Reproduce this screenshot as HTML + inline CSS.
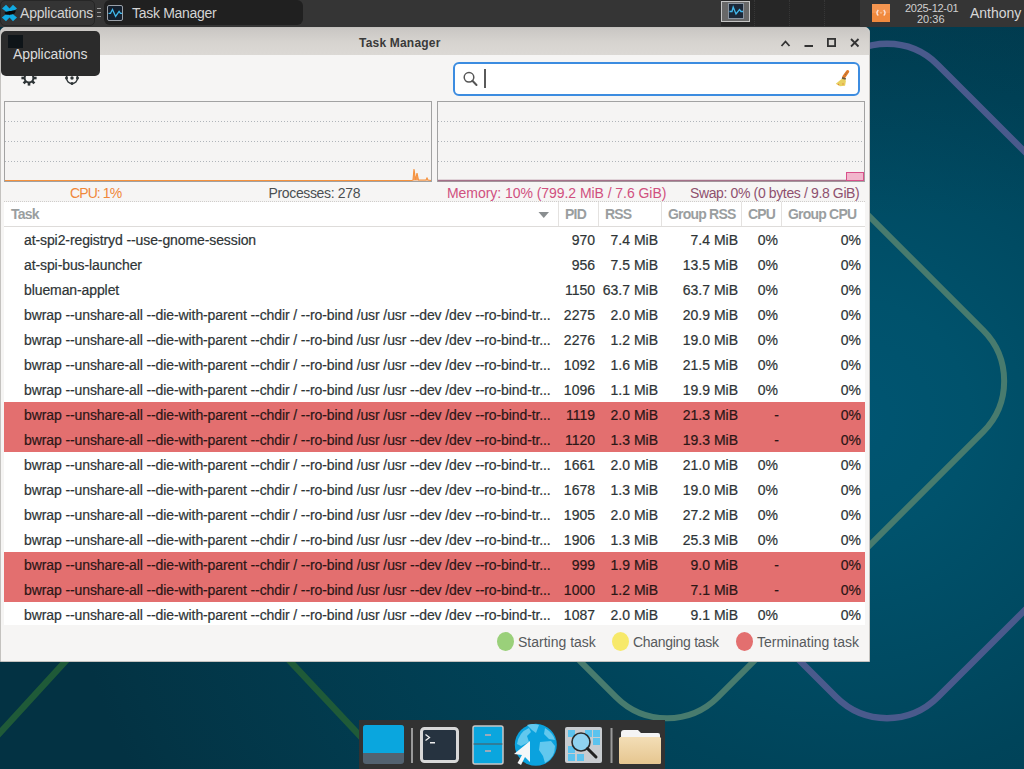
<!DOCTYPE html>
<html><head><meta charset="utf-8">
<style>
*{box-sizing:border-box;margin:0;padding:0}
html,body{width:1024px;height:769px;overflow:hidden;font-family:"Liberation Sans",sans-serif;}
body{position:relative;background:#0a4a60;}
.a{position:absolute}
.t{position:absolute;white-space:pre;font-size:14px;line-height:17px}
.row{position:absolute;left:4px;width:861px;background:#fff;color:#2e3436;-webkit-text-stroke:0.2px #2e3436;font-size:14px;line-height:17px;white-space:pre;overflow:hidden}
.row.red{background:#e36f6f;color:#2b1616;-webkit-text-stroke:0.2px #2b1616}
.tname{position:absolute;left:20px;letter-spacing:-0.1px}
.val{position:absolute;text-align:right}
.hd{position:absolute;top:206px;color:#9a9e9f;font-size:14px;line-height:17px;white-space:pre;font-weight:bold;letter-spacing:-0.8px}
.sep{position:absolute;top:202px;width:1px;height:24px;background:#e4e2e0}
</style></head><body>
<!-- wallpaper -->
<svg class="a" style="left:0;top:0" width="1024" height="769" viewBox="0 0 1024 769">
 <defs>
  <radialGradient id="g1" gradientUnits="userSpaceOnUse" cx="850" cy="420" r="800" fx="850" fy="420">
   <stop offset="0" stop-color="#005572"/>
   <stop offset="0.15" stop-color="#00526c"/>
   <stop offset="0.3" stop-color="#004b63"/>
   <stop offset="0.45" stop-color="#00445a"/>
   <stop offset="0.95" stop-color="#033445"/>
   <stop offset="1" stop-color="#033243"/>
  </radialGradient>
  <linearGradient id="g2" x1="0" y1="0" x2="0" y2="1">
   <stop offset="0" stop-color="#00141e" stop-opacity="0.15"/>
   <stop offset="1" stop-color="#00141e" stop-opacity="0"/>
  </linearGradient>
 </defs>
 <rect width="1024" height="769" fill="url(#g1)"/>
 <rect width="1024" height="220" fill="url(#g2)"/>
 <rect x="407.5" y="121.5" width="519" height="519" rx="72" transform="rotate(45 667 381)" fill="none" stroke="#487b6e" stroke-width="6"/>
 <rect x="627.5" y="121.5" width="519" height="519" rx="72" transform="rotate(45 887 381)" fill="none" stroke="#4a5a8c" stroke-width="6.5"/>
 <path d="M-180.5 930 L176.4 540 L541.8 930" fill="none" stroke="#1f5a38" stroke-width="6.5"/>
</svg>

<!-- top panel -->
<div class="a" style="left:0;top:0;width:1024px;height:27px;background:#353535"></div>
<div class="a" style="left:0;top:0;width:95px;height:26px;background:#343434;border:1px solid #262626;border-radius:5px"></div>
<svg class="a" style="left:0;top:0" width="20" height="26" viewBox="0 0 20 26">
 <g fill="#12aae2">
  <path d="M2 8.5 L6 4.8 L10.5 9.5 L8 13 Z"/>
  <path d="M17 8.5 L13 4.8 L8.5 9.5 L11 13 Z"/>
  <path d="M1.8 17.5 L6 21.3 L10.5 16.5 L7.5 13 Z"/>
  <path d="M17 17.5 L13 21.3 L8.5 16.5 L11.5 13 Z"/>
 </g>
 <path d="M4.5 12.5 Q8 10.5 11 11 Q13.5 10 16 10.5 L14.5 13.5 Q10.5 15.5 5.5 14.5 Z" fill="#080808"/>
</svg>
<div class="t" style="left:20px;top:5px;color:#d4d4d4;letter-spacing:-0.2px">Applications</div>
<div class="a" style="left:97px;top:8px;width:4px;height:1px;background:#9a9a9a"></div>
<div class="a" style="left:97px;top:12px;width:4px;height:1px;background:#9a9a9a"></div>
<div class="a" style="left:97px;top:16px;width:4px;height:1px;background:#9a9a9a"></div>
<div class="a" style="left:104px;top:0;width:199px;height:25px;background:#202020;border-radius:6px"></div>
<div class="a" style="left:107px;top:5px;width:16px;height:16px;border:1px solid #9aa0a8;border-radius:2px;background:#14202e"></div>
<svg class="a" style="left:107px;top:5px" width="16" height="16"><polyline points="1.5,8.3 3.5,8.3 5.5,4.4 8.6,11.4 12.1,6.3 13.5,8.3 15,8.3" fill="none" stroke="#40b8ec" stroke-width="1.3"/></svg>
<div class="t" style="left:132px;top:5px;color:#d4d4d4;letter-spacing:-0.3px">Task Manager</div>
<div class="a" style="left:721px;top:0;width:139px;height:26px;background:#262626"></div>
<div class="a" style="left:754px;top:0;width:0;height:26px;border-left:1px dotted #363636"></div>
<div class="a" style="left:789px;top:0;width:0;height:26px;border-left:1px dotted #363636"></div>
<div class="a" style="left:824px;top:0;width:0;height:26px;border-left:1px dotted #363636"></div>
<div class="a" style="left:721px;top:1px;width:29px;height:21px;background:#686868;border:1px solid #c4c4c4"></div>
<div class="a" style="left:728px;top:3px;width:16px;height:16px;background:#1b2838;border:1px solid #8a94a0"></div>
<svg class="a" style="left:729px;top:4px" width="14" height="14"><polyline points="0.5,7.5 3,7.5 4.2,3 7,10 10.5,5.5 12,7.5 14,7.5" fill="none" stroke="#40b8ec" stroke-width="1.3"/></svg>
<svg class="a" style="left:872px;top:4px" width="18" height="18">
 <rect width="18" height="18" fill="#f18a3e"/>
 <rect width="18" height="9" fill="#f49550"/>
 <path d="M6.3 6 Q3.6 8.8 6.3 11.6 M11.7 6 Q14.4 8.8 11.7 11.6" fill="none" stroke="#fbe2da" stroke-width="1.4"/>
 <circle cx="9" cy="8.8" r="0.9" fill="#f8c090"/>
</svg>
<div class="t" style="left:905px;top:2px;color:#d0d0d0;font-size:11px;line-height:12px;letter-spacing:-0.3px">2025-12-01</div>
<div class="t" style="left:917px;top:13px;color:#d0d0d0;font-size:11px;line-height:12px">20:36</div>
<div class="t" style="left:970px;top:5px;color:#d8d8d8">Anthony</div>

<!-- window -->
<div class="a" style="left:0;top:27px;width:870px;height:635px;background:#f6f5f4;border:1px solid #c4c2bf;border-radius:5px 5px 0 0"></div>
<div class="a" style="left:1px;top:28px;width:868px;height:27px;background:linear-gradient(#c9c6c3,#d6d3cf 50%,#dcd9d5);border-radius:4px 4px 0 0"></div>
<div class="t" style="left:359px;top:35px;font-size:12px;font-weight:bold;color:#3a3a3a;letter-spacing:0.2px">Task Manager</div>
<svg class="a" style="left:776px;top:34px" width="90" height="18">
 <polyline points="5.5,12 9.5,7.5 13.5,12" fill="none" stroke="#333" stroke-width="1.8"/>
 <rect x="28.5" y="11" width="8.5" height="2" fill="#333"/>
 <rect x="51.9" y="4.9" width="7.2" height="7.2" fill="none" stroke="#333" stroke-width="1.8"/>
 <path d="M75 5 L82.5 12.5 M82.5 5 L75 12.5" stroke="#333" stroke-width="1.8"/>
</svg>

<!-- search box -->
<div class="a" style="left:453px;top:62px;width:407px;height:34px;background:#fff;border:2px solid #3c8ce0;border-radius:6px"></div>

<!-- toolbar icons -->
<svg class="a" style="left:19px;top:68px" width="20" height="20" viewBox="-10 -10 20 20">
 <g fill="#2e3436">
  <circle r="5.4"/>
  <rect x="-1.3" y="-7.6" width="2.6" height="15.2"/>
  <rect x="-1.3" y="-7.6" width="2.6" height="15.2" transform="rotate(45)"/>
  <rect x="-1.3" y="-7.6" width="2.6" height="15.2" transform="rotate(90)"/>
  <rect x="-1.3" y="-7.6" width="2.6" height="15.2" transform="rotate(135)"/>
 </g>
 <circle r="3.4" fill="#f6f5f4"/>
</svg>
<svg class="a" style="left:62px;top:68px" width="20" height="20" viewBox="-10 -10 20 20">
 <circle r="5.5" fill="none" stroke="#2e3436" stroke-width="1.4"/>
 <g fill="#2e3436"><circle r="1.7"/><circle cx="0" cy="-5.5" r="1.5"/><circle cx="0" cy="5.5" r="1.5"/><circle cx="-5.5" cy="0" r="1.5"/><circle cx="5.5" cy="0" r="1.5"/></g>
</svg>
<svg class="a" style="left:460px;top:68px" width="20" height="20" viewBox="0 0 20 20">
 <circle cx="9" cy="9.3" r="4.8" fill="none" stroke="#555" stroke-width="1.5"/>
 <path d="M12.4 12.8 L16.5 17" stroke="#555" stroke-width="2" stroke-linecap="round"/>
</svg>
<div class="a" style="left:484px;top:69px;width:2px;height:19px;background:#5a5a5a"></div>
<svg class="a" style="left:832px;top:68px" width="20" height="22" viewBox="0 0 20 22">
 <path d="M15.6 3.6 L11.8 9" stroke="#e07a28" stroke-width="3.2" stroke-linecap="round"/>
 <path d="M14.8 4.5 L12.8 7.5" stroke="#8a6a48" stroke-width="1" stroke-dasharray="1 1"/>
 <path d="M10.2 10.6 L13.5 11.3 L13.8 13.5 L13.1 17.8 L8 18.2 L3.8 15.7 Z" fill="#e8d060"/>
 <path d="M10 9.8 L13.8 11" stroke="#6a5a40" stroke-width="1.8"/>
 <circle cx="6.5" cy="16.5" r="0.7" fill="#e08040"/><circle cx="11" cy="16" r="0.7" fill="#e08040"/>
</svg>

<!-- graphs -->
<div class="a" style="left:4px;top:101px;width:428px;height:81px;background:#f5f4f3;border:1px solid #a2a2a2"></div>
<div class="a" style="left:437px;top:101px;width:428px;height:81px;background:#f5f4f3;border:1px solid #a2a2a2"></div>
<svg class="a" style="left:0;top:100px" width="870" height="84">
 <g stroke="#b0b5ba" stroke-width="1" stroke-dasharray="1 2">
  <path d="M5 21.5 H431 M5 41.5 H431 M5 61.5 H431"/>
  <path d="M438 21.5 H864 M438 41.5 H864 M438 61.5 H864"/>
 </g>
 <path d="M5 80.5 H412 L413 80 L414 69 L415.5 80 L417 73 L418.5 80 L426 80 L427 78 L428 80 L431 80.5" fill="#f5a060" stroke="#f5923e" stroke-width="1.1"/>
 <path d="M438 80.5 H846" stroke="#a47088" stroke-width="1.5"/>
 <rect x="846.5" y="72.5" width="17" height="8" fill="#f2b6cc" stroke="#d8508a" stroke-width="1"/>
</svg>

<div class="t" style="left:70px;top:185px;color:#f0883a;letter-spacing:-0.9px">CPU: 1%</div>
<div class="t" style="left:268.5px;top:185px;color:#4a4f52;letter-spacing:-0.35px">Processes: 278</div>
<div class="t" style="left:447px;top:185px;color:#d0507f;letter-spacing:-0.05px">Memory: 10% (799.2 MiB / 7.6 GiB)</div>
<div class="t" style="left:690px;top:185px;color:#8e506e;letter-spacing:-0.37px">Swap: 0% (0 bytes / 9.8 GiB)</div>

<!-- tree header -->
<div class="a" style="left:4px;top:201px;width:861px;height:1px;border-top:1px dotted #cfcdcb"></div>
<div class="a" style="left:4px;top:202px;width:861px;height:25px;background:#fff;border-bottom:1px solid #dedcda"></div>
<div class="hd" style="left:11px">Task</div>
<div class="hd" style="left:565px">PID</div>
<div class="hd" style="left:605px">RSS</div>
<div class="hd" style="left:668px">Group RSS</div>
<div class="hd" style="left:748px">CPU</div>
<div class="hd" style="left:788px">Group CPU</div>
<div class="sep" style="left:558px"></div>
<div class="sep" style="left:598px"></div>
<div class="sep" style="left:661px"></div>
<div class="sep" style="left:741px"></div>
<div class="sep" style="left:781px"></div>
<svg class="a" style="left:538px;top:211px" width="12" height="8"><path d="M0.5 1 L11 1 L5.75 7 Z" fill="#8a8e90"/></svg>

<div class="row" style="top:227px;height:25px"><div class="tname" style="top:5px">at-spi2-registryd --use-gnome-session</div><div class="val" style="left:554px;width:37px;top:5px">970</div><div class="val" style="left:594px;width:60px;top:5px">7.4 MiB</div><div class="val" style="left:657px;width:77px;top:5px">7.4 MiB</div><div class="val" style="left:737px;width:37px;top:5px">0%</div><div class="val" style="left:777px;width:80px;top:5px">0%</div></div>
<div class="row" style="top:252px;height:25px"><div class="tname" style="top:5px">at-spi-bus-launcher</div><div class="val" style="left:554px;width:37px;top:5px">956</div><div class="val" style="left:594px;width:60px;top:5px">7.5 MiB</div><div class="val" style="left:657px;width:77px;top:5px">13.5 MiB</div><div class="val" style="left:737px;width:37px;top:5px">0%</div><div class="val" style="left:777px;width:80px;top:5px">0%</div></div>
<div class="row" style="top:277px;height:25px"><div class="tname" style="top:5px">blueman-applet</div><div class="val" style="left:554px;width:37px;top:5px">1150</div><div class="val" style="left:594px;width:60px;top:5px">63.7 MiB</div><div class="val" style="left:657px;width:77px;top:5px">63.7 MiB</div><div class="val" style="left:737px;width:37px;top:5px">0%</div><div class="val" style="left:777px;width:80px;top:5px">0%</div></div>
<div class="row" style="top:302px;height:25px"><div class="tname" style="top:5px">bwrap --unshare-all --die-with-parent --chdir / --ro-bind /usr /usr --dev /dev --ro-bind-tr...</div><div class="val" style="left:554px;width:37px;top:5px">2275</div><div class="val" style="left:594px;width:60px;top:5px">2.0 MiB</div><div class="val" style="left:657px;width:77px;top:5px">20.9 MiB</div><div class="val" style="left:737px;width:37px;top:5px">0%</div><div class="val" style="left:777px;width:80px;top:5px">0%</div></div>
<div class="row" style="top:327px;height:25px"><div class="tname" style="top:5px">bwrap --unshare-all --die-with-parent --chdir / --ro-bind /usr /usr --dev /dev --ro-bind-tr...</div><div class="val" style="left:554px;width:37px;top:5px">2276</div><div class="val" style="left:594px;width:60px;top:5px">1.2 MiB</div><div class="val" style="left:657px;width:77px;top:5px">19.0 MiB</div><div class="val" style="left:737px;width:37px;top:5px">0%</div><div class="val" style="left:777px;width:80px;top:5px">0%</div></div>
<div class="row" style="top:352px;height:25px"><div class="tname" style="top:5px">bwrap --unshare-all --die-with-parent --chdir / --ro-bind /usr /usr --dev /dev --ro-bind-tr...</div><div class="val" style="left:554px;width:37px;top:5px">1092</div><div class="val" style="left:594px;width:60px;top:5px">1.6 MiB</div><div class="val" style="left:657px;width:77px;top:5px">21.5 MiB</div><div class="val" style="left:737px;width:37px;top:5px">0%</div><div class="val" style="left:777px;width:80px;top:5px">0%</div></div>
<div class="row" style="top:377px;height:25px"><div class="tname" style="top:5px">bwrap --unshare-all --die-with-parent --chdir / --ro-bind /usr /usr --dev /dev --ro-bind-tr...</div><div class="val" style="left:554px;width:37px;top:5px">1096</div><div class="val" style="left:594px;width:60px;top:5px">1.1 MiB</div><div class="val" style="left:657px;width:77px;top:5px">19.9 MiB</div><div class="val" style="left:737px;width:37px;top:5px">0%</div><div class="val" style="left:777px;width:80px;top:5px">0%</div></div>
<div class="row red" style="top:402px;height:25px"><div class="tname" style="top:5px">bwrap --unshare-all --die-with-parent --chdir / --ro-bind /usr /usr --dev /dev --ro-bind-tr...</div><div class="val" style="left:554px;width:37px;top:5px">1119</div><div class="val" style="left:594px;width:60px;top:5px">2.0 MiB</div><div class="val" style="left:657px;width:77px;top:5px">21.3 MiB</div><div class="val" style="left:737px;width:38px;top:5px">-</div><div class="val" style="left:777px;width:80px;top:5px">0%</div></div>
<div class="row red" style="top:427px;height:25px"><div class="tname" style="top:5px">bwrap --unshare-all --die-with-parent --chdir / --ro-bind /usr /usr --dev /dev --ro-bind-tr...</div><div class="val" style="left:554px;width:37px;top:5px">1120</div><div class="val" style="left:594px;width:60px;top:5px">1.3 MiB</div><div class="val" style="left:657px;width:77px;top:5px">19.3 MiB</div><div class="val" style="left:737px;width:38px;top:5px">-</div><div class="val" style="left:777px;width:80px;top:5px">0%</div></div>
<div class="row" style="top:452px;height:25px"><div class="tname" style="top:5px">bwrap --unshare-all --die-with-parent --chdir / --ro-bind /usr /usr --dev /dev --ro-bind-tr...</div><div class="val" style="left:554px;width:37px;top:5px">1661</div><div class="val" style="left:594px;width:60px;top:5px">2.0 MiB</div><div class="val" style="left:657px;width:77px;top:5px">21.0 MiB</div><div class="val" style="left:737px;width:37px;top:5px">0%</div><div class="val" style="left:777px;width:80px;top:5px">0%</div></div>
<div class="row" style="top:477px;height:25px"><div class="tname" style="top:5px">bwrap --unshare-all --die-with-parent --chdir / --ro-bind /usr /usr --dev /dev --ro-bind-tr...</div><div class="val" style="left:554px;width:37px;top:5px">1678</div><div class="val" style="left:594px;width:60px;top:5px">1.3 MiB</div><div class="val" style="left:657px;width:77px;top:5px">19.0 MiB</div><div class="val" style="left:737px;width:37px;top:5px">0%</div><div class="val" style="left:777px;width:80px;top:5px">0%</div></div>
<div class="row" style="top:502px;height:25px"><div class="tname" style="top:5px">bwrap --unshare-all --die-with-parent --chdir / --ro-bind /usr /usr --dev /dev --ro-bind-tr...</div><div class="val" style="left:554px;width:37px;top:5px">1905</div><div class="val" style="left:594px;width:60px;top:5px">2.0 MiB</div><div class="val" style="left:657px;width:77px;top:5px">27.2 MiB</div><div class="val" style="left:737px;width:37px;top:5px">0%</div><div class="val" style="left:777px;width:80px;top:5px">0%</div></div>
<div class="row" style="top:527px;height:25px"><div class="tname" style="top:5px">bwrap --unshare-all --die-with-parent --chdir / --ro-bind /usr /usr --dev /dev --ro-bind-tr...</div><div class="val" style="left:554px;width:37px;top:5px">1906</div><div class="val" style="left:594px;width:60px;top:5px">1.3 MiB</div><div class="val" style="left:657px;width:77px;top:5px">25.3 MiB</div><div class="val" style="left:737px;width:37px;top:5px">0%</div><div class="val" style="left:777px;width:80px;top:5px">0%</div></div>
<div class="row red" style="top:552px;height:25px"><div class="tname" style="top:5px">bwrap --unshare-all --die-with-parent --chdir / --ro-bind /usr /usr --dev /dev --ro-bind-tr...</div><div class="val" style="left:554px;width:37px;top:5px">999</div><div class="val" style="left:594px;width:60px;top:5px">1.9 MiB</div><div class="val" style="left:657px;width:77px;top:5px">9.0 MiB</div><div class="val" style="left:737px;width:38px;top:5px">-</div><div class="val" style="left:777px;width:80px;top:5px">0%</div></div>
<div class="row red" style="top:577px;height:25px"><div class="tname" style="top:5px">bwrap --unshare-all --die-with-parent --chdir / --ro-bind /usr /usr --dev /dev --ro-bind-tr...</div><div class="val" style="left:554px;width:37px;top:5px">1000</div><div class="val" style="left:594px;width:60px;top:5px">1.2 MiB</div><div class="val" style="left:657px;width:77px;top:5px">7.1 MiB</div><div class="val" style="left:737px;width:38px;top:5px">-</div><div class="val" style="left:777px;width:80px;top:5px">0%</div></div>
<div class="row" style="top:602px;height:23px"><div class="tname" style="top:5px">bwrap --unshare-all --die-with-parent --chdir / --ro-bind /usr /usr --dev /dev --ro-bind-tr...</div><div class="val" style="left:554px;width:37px;top:5px">1087</div><div class="val" style="left:594px;width:60px;top:5px">2.0 MiB</div><div class="val" style="left:657px;width:77px;top:5px">9.1 MiB</div><div class="val" style="left:737px;width:37px;top:5px">0%</div><div class="val" style="left:777px;width:80px;top:5px">0%</div></div>

<!-- legend -->
<div class="a" style="left:497px;top:632px;width:17px;height:19px;border-radius:50%;background:#9ad07a"></div>
<div class="t" style="left:518px;top:634px;color:#565a5c">Starting task</div>
<div class="a" style="left:612px;top:632px;width:17px;height:19px;border-radius:50%;background:#f7e96a"></div>
<div class="t" style="left:633px;top:634px;color:#565a5c;letter-spacing:-0.3px">Changing task</div>
<div class="a" style="left:736px;top:632px;width:17px;height:19px;border-radius:50%;background:#e36f6f"></div>
<div class="t" style="left:757px;top:634px;color:#565a5c">Terminating task</div>

<!-- tooltip -->
<div class="a" style="left:1px;top:31px;width:99px;height:45px;background:#2b2b2b;border-radius:5px"></div>
<div class="a" style="left:8px;top:35px;width:15px;height:13px;background:#0e1418"></div>
<div class="t" style="left:13px;top:46px;color:#dcdcdc;letter-spacing:-0.1px">Applications</div>

<!-- dock -->
<div class="a" style="left:359px;top:720px;width:306px;height:49px;background:#323232"></div>
<svg class="a" style="left:359px;top:720px" width="306" height="49">
 <!-- show desktop -->
 <rect x="4" y="5" width="41" height="39" rx="3" fill="#536270"/>
 <path d="M4 8 Q4 5 7 5 H42 Q45 5 45 8 V33 H4 Z" fill="#0aa6de"/>
 <rect x="52" y="8" width="2" height="35" fill="#9a9a9a"/>
 <!-- terminal -->
 <rect x="62.5" y="8.5" width="36" height="33" rx="3" fill="#263340" stroke="#d8d8d8" stroke-width="3"/>
 <path d="M66.5 14.5 L70.5 17.5 L66.5 20.5" fill="none" stroke="#eee" stroke-width="1.3"/>
 <rect x="71" y="22" width="5" height="1.5" fill="#eee"/>
 <!-- files -->
 <rect x="114" y="6" width="30" height="38" rx="2" fill="#0aa6de" stroke="#c8c8c8" stroke-width="1.5"/>
 <rect x="114.5" y="23.5" width="29" height="1" fill="#555"/>
 <rect x="126" y="14" width="6" height="2" fill="#9ab"/>
 <rect x="126" y="30" width="6" height="2" fill="#9ab"/>
 <!-- globe -->
 <circle cx="176.8" cy="24.8" r="21" fill="#0aa2de"/>
 <path d="M158 24 Q160 12 170 8 L172 12 L168 16 L170 22 L162 26 Z M168 5 Q174 3 180 5 L177 13 L173 10 Z M186 8 Q194 13 196 20 L190 19 L185 14 Z M181 22 L192 21 L196 26 Q196 38 186 43 L184 36 L180 30 Z" fill="#62c8ee"/>
 <path d="M171 21 L171 42 L166 37 L162 45 L158.5 43 L163 35 L155 34 Z" fill="#f4f6f8"/>
 <!-- appfinder -->
 <rect x="206" y="7" width="37" height="36" rx="2" fill="#c8ccd0"/>
 <g fill="#5cc3ee"><rect x="209" y="10" width="7" height="7"/><rect x="226" y="10" width="7" height="7"/><rect x="234" y="10" width="7" height="7"/><rect x="234" y="18" width="7" height="7"/><rect x="209" y="26" width="7" height="7"/><rect x="209" y="34" width="7" height="7"/><rect x="218" y="34" width="7" height="7"/></g>
 <circle cx="222" cy="22" r="9" fill="#8fd2f0" stroke="#2a2a2a" stroke-width="1.6"/>
 <path d="M228.5 28.5 L237 37" stroke="#222" stroke-width="3" stroke-linecap="round"/>
 <rect x="251.5" y="8" width="2" height="35" fill="#9a9a9a"/>
 <!-- folder -->
 <defs><linearGradient id="fg" x1="0" y1="0" x2="0" y2="1"><stop offset="0" stop-color="#f3deb6"/><stop offset="1" stop-color="#e6c690"/></linearGradient></defs>
 <path d="M262 13 Q262 10 265 10 H279 L282 13 H299 Q301 13 301 15 V20 H262 Z" fill="#f4f4f4"/>
 <rect x="260" y="17" width="42" height="27" rx="1.5" fill="url(#fg)"/>
</svg>
</body></html>
